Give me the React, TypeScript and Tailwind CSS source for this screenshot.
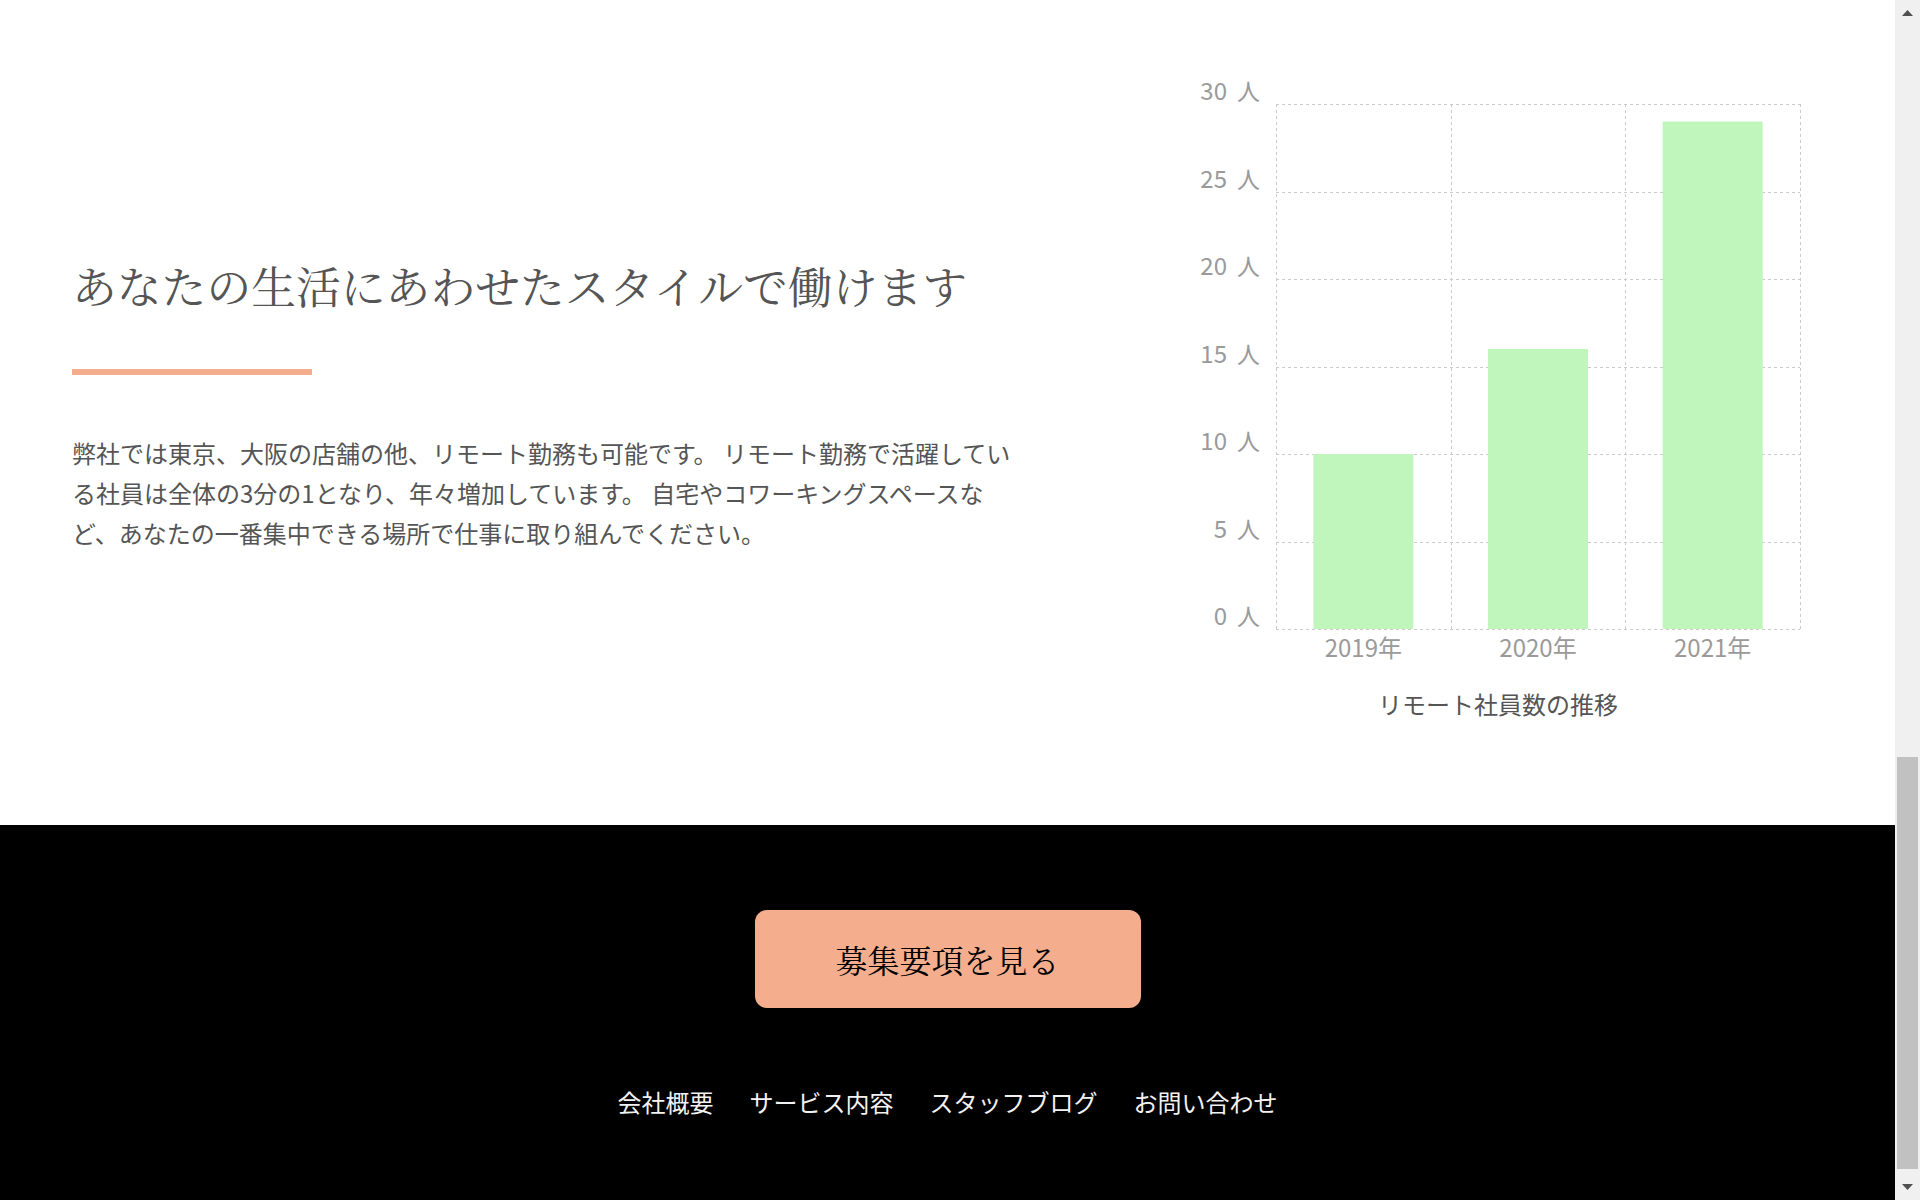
const years = [
  { label: "2019年", value: 10 },
  { label: "2020年", value: 16 },
  { label: "2021年", value: 29 },
];

const ticks = [0, 5, 10, 15, 20, 25, 30];
const links = ["会社概要", "サービス内容", "スタッフブログ", "お問い合わせ"];

const RemoteChart = () => {
  const left = 86;
  const right = 610;
  const top = 44;
  const bottom = 569;
  const perPerson = (bottom - top) / 30;
  const col = (right - left) / 3;
  const font = "Noto Sans CJK JP, Noto Sans, sans-serif";

  return (
    <svg width={620} height={670} viewBox="0 0 620 670" className="block shrink-0">
      {ticks.map((t) => {
        const y = Math.round(bottom - t * perPerson) + 0.5;
        return (
          <g key={t}>
            <line x1={left} x2={right} y1={y} y2={y} stroke="#cbcbcb" strokeWidth={1} strokeDasharray="3 3" />
            <text x={37} y={y - 5} textAnchor="end" fontSize={24} fill="#9a9a9a" fontFamily={font}>
              {t}
            </text>
            <text x={47} y={y - 5} fontSize={23} fill="#9a9a9a" fontFamily={font}>
              人
            </text>
          </g>
        );
      })}
      {[0, 1, 2, 3].map((i) => {
        const x = Math.round(left + col * i) + 0.5;
        return <line key={i} x1={x} x2={x} y1={top} y2={bottom} stroke="#cbcbcb" strokeWidth={1} strokeDasharray="3 3" />;
      })}
      {years.map((y, i) => {
        const cx = left + col * (i + 0.5);
        const h = y.value * perPerson;
        return (
          <g key={y.label}>
            <rect x={cx - 50} y={bottom - h} width={100} height={h} fill="#c0f5bb" />
            <text x={cx} y={597} textAnchor="middle" fontSize={24} fill="#9a9a9a" fontFamily={font}>
              {y.label}
            </text>
          </g>
        );
      })}
      <text x={308} y={654} textAnchor="middle" fontSize={24} fill="#555555" fontFamily={font}>
        リモート社員数の推移
      </text>
    </svg>
  );
};

const ScrollBar = () => {
  return (
    <aside className="w-[25px] shrink-0 bg-[#f0f0f0] flex flex-col">
      <div className="h-[25px] flex justify-center pt-[10px]">
        <svg width="11" height="6" viewBox="0 0 11 6">
          <polygon points="5.5,0 11,6 0,6" fill="#505050" />
        </svg>
      </div>
      <div className="h-[732px]" />
      <div className="h-[412px] mx-[2px] bg-[#c1c1c1]" />
      <div className="flex-1 flex justify-center items-end pb-[10px]">
        <svg width="11" height="6" viewBox="0 0 11 6">
          <polygon points="0,0 11,0 5.5,6" fill="#505050" />
        </svg>
      </div>
    </aside>
  );
};

const App = () => {
  return (
    <div className="flex h-[1200px] w-full overflow-hidden bg-white">
      <main className="flex-1 flex flex-col min-w-0">
        <section className="h-[825px] shrink-0 flex items-start justify-between pl-[72px] pr-[85px] pt-[60px]">
          <div className="w-[952px] mt-[203px]">
            <h2 className="text-[44.8px] leading-none text-[#555555] font-normal font-['Noto_Serif_CJK_JP','Noto_Sans_CJK_JP',serif]">
              あなたの生活にあわせたスタイルで働けます
            </h2>
            <div className="w-[240px] h-[6px] bg-[#f4ae8e] mt-[61px]" />
            <p className="mt-[58px] text-[24px] leading-[40px] text-[#555555] font-['Noto_Sans_CJK_JP','Noto_Sans',sans-serif]">
              弊社では東京、大阪の店舗の他、リモート勤務も可能です。 リモート勤務で活躍している社員は全体の3分の1となり、年々増加しています。 自宅やコワーキングスペースなど、あなたの一番集中できる場所で仕事に取り組んでください。
            </p>
          </div>
          <RemoteChart />
        </section>
        <footer className="flex-1 bg-black flex flex-col items-center pt-[85px]">
          <a
            href="#"
            className="w-[386px] h-[98px] rounded-[12px] bg-[#f4ae8e] flex items-center justify-center text-[32px] text-black font-['Noto_Serif_CJK_JP','Noto_Sans_CJK_JP',serif]"
          >
            募集要項を見る
          </a>
          <nav className="mt-[82px] flex gap-9 text-[24px] leading-none text-[#f2f2f2] font-['Noto_Sans_CJK_JP','Noto_Sans',sans-serif]">
            {links.map((l) => (
              <a key={l} href="#">
                {l}
              </a>
            ))}
          </nav>
        </footer>
      </main>
      <ScrollBar />
    </div>
  );
};

export default App;
